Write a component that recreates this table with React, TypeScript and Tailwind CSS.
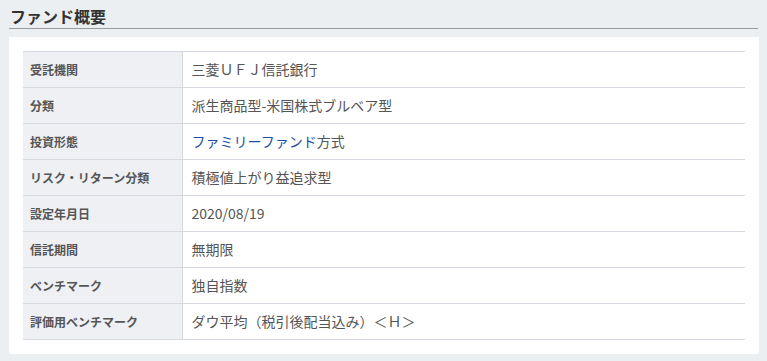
const rows: { label: string; value: React.ReactNode }[] = [
  { label: '受託機関', value: '三菱ＵＦＪ信託銀行' },
  { label: '分類', value: '派生商品型-米国株式ブルベア型' },
  {
    label: '投資形態',
    value: (
      <>
        <span className="text-[#1f4fa3]">ファミリーファンド</span>方式
      </>
    ),
  },
  { label: 'リスク・リターン分類', value: '積極値上がり益追求型' },
  { label: '設定年月日', value: '2020/08/19' },
  { label: '信託期間', value: '無期限' },
  { label: 'ベンチマーク', value: '独自指数' },
  { label: '評価用ベンチマーク', value: 'ダウ平均（税引後配当込み）＜Ｈ＞' },
];

export default function App() {
  return (
    <div
      className="min-h-[361px] w-[767px] bg-[#eceff2] px-[9px] pt-[5px]"
      style={{ fontFamily: '"Noto Sans CJK JP", "Noto Sans", sans-serif' }}
    >
      {/* HEADER */}
      <h2 className="border-b border-[#9a9a9a] pb-[1px] pl-[1px] text-[16px] leading-[22px] font-bold text-[#333]">
        ファンド概要
      </h2>

      {/* CARD */}
      <div className="mt-[8px] w-[750px] rounded-b-[3px] bg-white p-[14px]">
        <table className="w-[722px] border-collapse">
          <tbody>
            {rows.map((r) => (
              <tr key={r.label} className="h-[36px] border-y border-[#d3d9de]">
                <th className="w-[159px] border-r border-[#d3d9de] bg-[#eef0f4] pl-[7px] text-left text-[12px] font-bold text-[#555]">
                  {r.label}
                </th>
                <td className="pl-[9px] text-[14px] text-[#555]">{r.value}</td>
              </tr>
            ))}
          </tbody>
        </table>
      </div>
    </div>
  );
}
